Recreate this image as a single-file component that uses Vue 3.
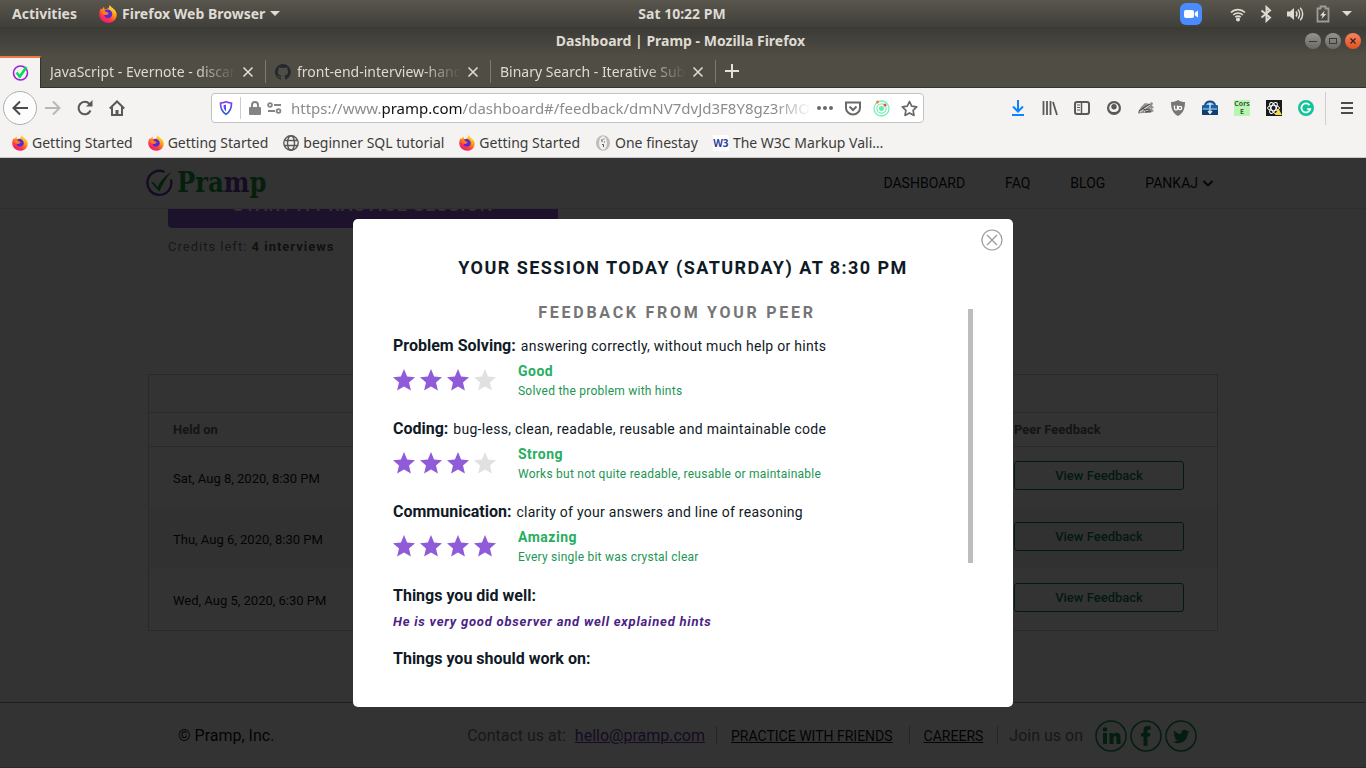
<script setup>
const tabs = [
  { title: 'JavaScript - Evernote - discarded', icon: false },
  { title: 'front-end-interview-handbook', icon: true },
  { title: 'Binary Search - Iterative Submission', icon: false },
]
const bookmarks = [
  { label: 'Getting Started', icon: 'firefox' },
  { label: 'Getting Started', icon: 'firefox' },
  { label: 'beginner SQL tutorial', icon: 'globe' },
  { label: 'Getting Started', icon: 'firefox' },
  { label: 'One finestay', icon: 'key' },
  { label: 'The W3C Markup Vali…', icon: 'w3' },
]
const sessions = ['Sat, Aug 8, 2020, 8:30 PM', 'Thu, Aug 6, 2020, 8:30 PM', 'Wed, Aug 5, 2020, 6:30 PM']
const ratings = [
  { name: 'Problem Solving:', about: 'answering correctly, without much help or hints', stars: 3, grade: 'Good', note: 'Solved the problem with hints' },
  { name: 'Coding:', about: 'bug-less, clean, readable, reusable and maintainable code', stars: 3, grade: 'Strong', note: 'Works but not quite readable, reusable or maintainable' },
  { name: 'Communication:', about: 'clarity of your answers and line of reasoning', stars: 4, grade: 'Amazing', note: 'Every single bit was crystal clear' },
]
</script>

<template>
  <div class="desktop">
    <svg class="defs" width="0" height="0" aria-hidden="true">
      <defs>
        <linearGradient id="fox" x1="0.8" y1="0" x2="0.2" y2="1">
          <stop offset="0" stop-color="#fff44f" /><stop offset="0.4" stop-color="#ff980e" /><stop offset="0.7" stop-color="#ff3647" /><stop offset="1" stop-color="#e31587" />
        </linearGradient>
        <linearGradient id="shield" x1="0" y1="0" x2="0" y2="1">
          <stop offset="0" stop-color="#8a3ff0" /><stop offset="1" stop-color="#2b5fd9" />
        </linearGradient>
        <symbol id="firefox" viewBox="0 0 16 16">
          <path d="M1.6 3.2 2.6 4 4.4 1.6 5 4 8.2 3.2C9 2 9.200 1 9.600 0c1 1.800 2 2.200 3 3.200C15 5 15.800 7 15.700 9c-.3 4-3.500 6.800-7.500 6.800S.6 12.800.3 8.800C.2 6.500.8 4.500 1.600 3.200Z" fill="url(#fox)" />
          <path d="M5 4.800c1-.8 3-1.200 4.500-.4 2 1 2.800 3.200 2 5.200-.8 1.800-2.600 2.500-4.300 2-1.600-.4-2.800-1.800-2.700-3.400 1 .8 2.400.9 3.300.2.7-.5.9-.9.200-1.200C6.800 6.900 5.600 6.500 5 4.800Z" fill="#5a2bd0" />
          <path d="M2.500 6c1-1 2.500-.8 3.500-.2 1 .7 2 .8 2.400 1.200-.2.800-1.300 1-1.900 1.400C5 9.500 3 8.500 2.500 6Z" fill="#ff7a20" />
        </symbol>
        <symbol id="check" viewBox="0 0 28 28">
          <path d="M18.500 3A12 12 0 1 0 24.900 10.500" fill="none" stroke="var(--ring)" stroke-width="2.400" />
          <path d="M5 13.500c1.500-.5 3-.2 4 1l2.500 3.500C15 11 19.500 6 25.800 2.500 20 9 16.500 15 13.500 22.500 10.500 20 8 16.500 5 13.500Z" fill="var(--tick)" />
        </symbol>
        <symbol id="star" viewBox="0 0 22 22">
          <path d="M11 0l3.100 7.600 7.900.7-6 5.300 1.900 8L11 17.400l-6.900 4.200 1.900-8-6-5.300 7.900-.7Z" fill="currentColor" />
        </symbol>
      </defs>
    </svg>

    <div class="panel">
      <div class="panel-left">
        <button class="panel-item">Activities</button>
        <button class="panel-item app-menu">
          <svg width="18" height="18"><use href="#firefox" /></svg>Firefox Web Browser<i class="caret"></i>
        </button>
      </div>
      <time class="panel-item">Sat 10:22 PM</time>
      <div class="tray">
        <svg class="zoomer" width="22" height="22" viewBox="0 0 22 22"><rect width="22" height="22" rx="6" fill="#4a8cff" /><rect x="4" y="7" width="10" height="8" rx="2" fill="#fff" /><path d="M14.800 9.800 18 7.500v7l-3.200-2.300Z" fill="#fff" /></svg>
        <svg width="16" height="16" viewBox="0 0 16 16" fill="none" stroke="#dfdbd2" stroke-width="1.700"><path d="M1 6.500a10 10 0 0 1 14 0M3.200 9a6.800 6.800 0 0 1 9.600 0M5.300 11.200a3.800 3.800 0 0 1 5.400 0" /><circle cx="8" cy="13.500" r="1.200" fill="#dfdbd2" /></svg>
        <svg width="16" height="18" viewBox="0 0 16 18" fill="none" stroke="#dfdbd2" stroke-width="2"><path d="M3.500 5.500 12 12.500 8.500 15.800V2.200L12 5.500 3.500 12.500" /></svg>
        <svg width="18" height="16" viewBox="0 0 18 16"><path d="M1 5.500h3L8 2v12L4 10.500H1Z" fill="#dfdbd2" /><path d="M10 5.500a4 4 0 0 1 0 5M12 3.500a7 7 0 0 1 0 9M14.200 1.800a9 9 0 0 1 0 12.400" fill="none" stroke="#dfdbd2" stroke-width="1.500" /></svg>
        <svg width="14" height="18" viewBox="0 0 14 18"><path d="M4.500 1.500h5v2H12.500v13h-11v-13h3Z" fill="none" stroke="#9f9c95" stroke-width="1.800" /><path d="M8.800 5.500 4 10.500h2.500L5.500 14l4.800-5H7.700Z" fill="#dfdbd2" /></svg>
        <i class="caret"></i>
      </div>
    </div>

    <div class="titlebar">
      <span></span>
      <span class="window-title">Dashboard | Pramp - Mozilla Firefox</span>
      <div class="window-buttons">
        <button aria-label="Minimize"><svg width="10" height="10"><path d="M1 5.500h8" stroke="#3a3935" /></svg></button>
        <button aria-label="Maximize"><svg width="10" height="10"><rect x="1.500" y="2.500" width="7" height="5" fill="none" stroke="#3a3935" /></svg></button>
        <button class="quit" aria-label="Close"><svg width="10" height="10"><path d="M2.500 2.500l5 5M7.500 2.500l-5 5" stroke="#3c2015" stroke-width="1.300" /></svg></button>
      </div>
    </div>

    <div class="tabs">
      <button class="tab-active" aria-label="Dashboard"><svg width="17" height="17"><circle cx="8.500" cy="9" r="7" fill="none" stroke="#a31fd6" stroke-width="1.600" /><path d="M4.500 8.500 7.800 12.500 14.500 3" fill="none" stroke="#06dc5c" stroke-width="2.600" /></svg></button>
      <div v-for="t in tabs" :key="t.title" class="tab">
        <svg v-if="t.icon" width="16" height="16" viewBox="0 0 16 16"><path d="M8 0a8 8 0 0 0-2.500 15.600c.4.100.5-.2.500-.4v-1.500c-2.200.5-2.700-.9-2.700-.9-.4-.9-.9-1.200-.9-1.200-.7-.5.1-.5.1-.5.8.1 1.200.8 1.200.8.7 1.200 1.900.9 2.300.7.1-.5.300-.9.500-1.100-1.800-.2-3.600-.9-3.600-4 0-.9.300-1.600.8-2.100-.1-.2-.4-1 .1-2.100 0 0 .7-.2 2.200.8a7.500 7.500 0 0 1 4 0c1.500-1 2.200-.8 2.200-.8.4 1.100.2 1.900.1 2.100.5.600.8 1.300.8 2.100 0 3.100-1.900 3.700-3.700 3.900.3.300.6.800.6 1.500v2.200c0 .2.100.5.600.4A8 8 0 0 0 8 0Z" fill="#24292e" /></svg>
        <span class="tab-title">{{ t.title }}</span>
        <button class="tab-close" aria-label="Close tab"><svg width="12" height="12"><path d="M1.500 1.500l9 9M10.500 1.500l-9 9" stroke="#dedbd5" stroke-width="1.600" /></svg></button>
      </div>
      <button class="new-tab" aria-label="New tab"><svg width="14" height="14"><path d="M7 0v14M0 7h14" stroke="#e4e1db" stroke-width="2" /></svg></button>
    </div>

    <div class="toolbar">
      <button class="back" aria-label="Back"><svg width="16" height="16" fill="none" stroke="#4c4b49" stroke-width="2"><path d="M16 8H1.500M8 1.500 1.500 8 8 14.500" /></svg></button>
      <button class="tool" aria-label="Forward"><svg width="16" height="16" fill="none" stroke="#b9b8b6" stroke-width="2"><path d="M0 8h14.500M8 1.500 14.500 8 8 14.500" /></svg></button>
      <button class="tool" aria-label="Reload"><svg width="16" height="16" fill="none" stroke="#5a5957" stroke-width="2"><path d="M13.500 10.500A6.200 6.200 0 1 1 12.500 4" /><path d="M15.500 0v6.500H9Z" fill="#5a5957" stroke="none" /></svg></button>
      <button class="tool" aria-label="Home"><svg width="16" height="16" fill="none" stroke="#5a5957" stroke-width="2"><path d="M.8 8.500 8 1.500l7.200 7M3 7v8h10V7" /><path d="M8 15v-5" stroke-width="3" /></svg></button>
      <div class="urlbar">
        <svg width="14" height="16" viewBox="0 0 14 16"><path d="M7 1.800c1.800.9 3.600 1.200 5.500 1.200 0 5.500-1.400 9-5.500 11.200C2.900 12 1.500 8.500 1.500 3c1.900 0 3.700-.3 5.500-1.200Z" fill="none" stroke="url(#shield)" stroke-width="1.700" /><path d="M7 4.500v7c-1.600-1.300-2.400-3.400-2.600-6.200C5.300 5.200 6.100 5 7 4.500Z" fill="#4a55e0" /></svg>
        <i class="url-rule"></i>
        <svg width="12" height="14" viewBox="0 0 12 14"><rect y="6" width="12" height="8" rx="1" fill="#858483" /><path d="M3 6.500V4a3 3 0 0 1 6 0v2.500" fill="none" stroke="#858483" stroke-width="2" /></svg>
        <svg class="perm" width="15" height="12" viewBox="0 0 15 12" fill="none" stroke="#858483" stroke-width="1.800"><circle cx="3" cy="3" r="1.900" /><path d="M7 3h7M1 9h7" /><circle cx="11.500" cy="9" r="1.900" /></svg>
        <label class="url-text"><span>https://www.</span><b>pramp.com</b><span>/dashboard#/feedback/dmNV7dvJd3F8Y8gz3rMO</span></label>
        <button class="url-tool" aria-label="Page actions"><svg width="16" height="4" fill="#6a6967"><circle cx="2" cy="2" r="2" /><circle cx="8" cy="2" r="2" /><circle cx="14" cy="2" r="2" /></svg></button>
        <button class="url-tool" aria-label="Save to Pocket"><svg width="16" height="15" fill="none" stroke="#6a6967" stroke-width="2"><path d="M1 1.500h14V7a7 6.500 0 0 1-14 0Z" /><path d="M4.500 5.500 8 9l3.500-3.500" /></svg></button>
        <button class="url-tool" aria-label="Extension"><svg width="17" height="17" viewBox="0 0 17 17" fill="none" stroke="#7deeb8" stroke-width="1.300"><circle cx="8.500" cy="8.500" r="7.500" /><circle cx="8.500" cy="8.500" r="4.600" /><circle cx="8.500" cy="8.500" r="2" fill="#5ce8a4" /><circle cx="4.500" cy="2" r="1.500" fill="#f5813a" stroke="none" /><circle cx="12" cy="5" r="1.500" fill="#f3502a" stroke="none" /></svg></button>
        <button class="url-tool" aria-label="Bookmark"><svg width="17" height="17" viewBox="0 0 17 17"><path d="m8.500 1.500 2.200 4.700 5 .7-3.600 3.500.9 5-4.500-2.500L4 15.400l.9-5L1.300 6.900l5-.7Z" fill="none" stroke="#6a6967" stroke-width="1.700" stroke-linejoin="round" /></svg></button>
      </div>
      <div class="extensions">
        <svg viewBox="0 0 16 16" fill="none" stroke="#0a84ff" stroke-width="2"><path d="M8 0v11M3 6.500l5 5 5-5M2 15h12" /></svg>
        <svg viewBox="0 0 16 16" fill="none" stroke="#5a5957" stroke-width="1.800"><path d="M1.500 1v14M5 1v14M8.500 1v14M11 2l4 13" /></svg>
        <svg viewBox="0 0 16 16" fill="none" stroke="#5a5957" stroke-width="2"><rect x="1" y="2" width="14" height="12" rx="2" /><path d="M7.500 2v12" stroke-width="1.500" /><path d="M3 5h3M3 7.500h3M3 10h3" stroke-width="1" /></svg>
        <svg viewBox="0 0 16 16"><circle cx="8" cy="8" r="7" fill="#5a5957" /><path d="M3.200 8a4.800 4.800 0 0 1 9.600 0c0 1-.3 1.800-.8 2.500-2 2-6 2-8 0-.5-.7-.8-1.500-.8-2.500Z" fill="#f4f3f2" /><circle cx="8" cy="6.800" r="2.700" fill="#5a5957" /></svg>
        <svg viewBox="0 0 16 16"><path d="M0 12 3 7 7 3l5 1 1-2 2 1-1 3 2 1-2 2 2 2-4 2H5l-5 .5Z" fill="#908f8c" /><path d="M2 12 12 5M6 12l7-4" stroke="#e2e1df" /><path d="m1 11 6-4 5-3M4 8l3 2 5-1M7 12l6-1" stroke="#454442" fill="none" /></svg>
        <svg viewBox="0 0 16 16"><path d="M8 0c2 1.500 4.500 2 7 2 0 7-2 11.500-7 14C3 13.500 1 9 1 2c2.500 0 5-.5 7-2Z" fill="#787776" /><path d="M4.500 5.500v3a1.500 1.500 0 0 0 3 0v-3" fill="none" stroke="#fff" stroke-width="1.300" /><circle cx="10" cy="8" r="1.700" fill="none" stroke="#fff" stroke-width="1.300" /></svg>
        <svg viewBox="0 0 16 16"><path d="M3 6c0-6 10-6 10 0" fill="#8fc3ea" stroke="#1b4a7c" stroke-width="2" /><rect y="5" width="16" height="10" rx="1" fill="#1d5fa5" /><path d="M0 10h16v4a1 1 0 0 1-1 1H1a1 1 0 0 1-1-1Z" fill="#143c6c" /><path d="M1 9h6M9 9h6" stroke="#64b4e6" stroke-width="1.500" /><path d="M8 3v10M6 11l2 2.500 2-2.500" fill="none" stroke="#e4f4ff" stroke-width="1.300" /></svg>
        <span class="cors">Cors<br />E</span>
        <svg viewBox="0 0 16 16"><rect width="16" height="16" fill="#1b1b1b" /><g fill="none" stroke="#fff"><ellipse cx="7.500" cy="8" rx="6" ry="2.500" /><ellipse cx="7.500" cy="8" rx="6" ry="2.500" transform="rotate(60 7.500 8)" /><ellipse cx="7.500" cy="8" rx="6" ry="2.500" transform="rotate(120 7.500 8)" /></g><path d="m12.500 8.500 3.500 6.500H9Z" fill="#f6d93b" /></svg>
        <svg viewBox="0 0 16 16"><circle cx="8" cy="8" r="8" fill="#15c39a" /><path d="M11.500 5.200A4.500 4.500 0 1 0 12.300 9H9" fill="none" stroke="#fff" stroke-width="1.700" /></svg>
      </div>
      <button class="menu" aria-label="Menu"><svg width="12" height="12"><path d="M0 1h12M0 6h12M0 11h12" stroke="#4c4b49" stroke-width="2" /></svg></button>
    </div>

    <div class="bookmarks">
      <a v-for="(b, i) in bookmarks" :key="i" href="#">
        <svg v-if="b.icon === 'firefox'" width="16" height="16"><use href="#firefox" /></svg>
        <svg v-else-if="b.icon === 'globe'" width="16" height="16" fill="none" stroke="#5a5957" stroke-width="1.400"><circle cx="8" cy="8" r="7.200" /><ellipse cx="8" cy="8" rx="3.500" ry="7.200" /><path d="M1.500 5.500h13M1.500 10.500h13" /></svg>
        <svg v-else-if="b.icon === 'key'" width="16" height="16"><ellipse cx="8" cy="8" rx="7" ry="7.800" fill="#bdbcba" /><ellipse cx="8" cy="8" rx="4" ry="6.800" fill="#f1f0ee" /><path d="M7 4v3M8.500 4h1M7 9.500h1.500V12M9 7h1" stroke="#555" fill="none" /></svg>
        <span v-else class="w3">W3</span>
        <span>{{ b.label }}</span>
      </a>
    </div>

    <div class="page">
      <header class="site-header">
        <a href="#" class="logo" aria-label="Pramp"><svg width="28" height="28"><use href="#check" /></svg><span>Pra<em>m</em>p</span></a>
        <nav>
          <a href="#">DASHBOARD</a><a href="#">FAQ</a><a href="#">BLOG</a>
          <a href="#">PANKAJ<svg width="12" height="12"><path d="M1.500 4 6 8.500 10.500 4" fill="none" stroke="#0b1420" stroke-width="1.800" /></svg></a>
        </nav>
      </header>
      <main>
        <div class="hero">
          <button class="start">START A PRACTICE SESSION</button>
          <p>Credits left: <b>4 interviews</b></p>
        </div>
        <table>
          <thead>
            <tr class="spacer-row"><td colspan="2"></td></tr>
            <tr><th class="held">Held on</th><th class="peer">Peer Feedback</th></tr>
          </thead>
          <tbody>
            <tr v-for="s in sessions" :key="s"><td>{{ s }}</td><td class="action"><button>View Feedback</button></td></tr>
          </tbody>
        </table>
      </main>
      <footer>
        <div class="footer-inner">
          <span class="copy">© Pramp, Inc.</span>
          <span class="contact">Contact us at: <a href="#">hello@pramp.com</a></span>
          <a href="#" class="foot-link">PRACTICE WITH FRIENDS</a>
          <a href="#" class="foot-link careers">CAREERS</a>
          <span class="join">Join us on</span>
          <div class="social">
            <a href="#" aria-label="LinkedIn"><svg viewBox="0 0 32 32"><circle cx="16" cy="16" r="15" /><path d="M8 13h4v11H8ZM14.500 13h4v1.500c2-3 7-2 7 2.500v7h-4v-6c0-3-3-2.500-3 0v6h-4Z" /><circle class="dot" cx="10" cy="9.500" r="2.300" /></svg></a>
            <a href="#" aria-label="Facebook"><svg viewBox="0 0 32 32"><circle cx="16" cy="16" r="15" /><path d="M13.500 26v-9.500H11V13h2.500v-3c0-3 2-4.500 7-3.800v3.500c-2 0-3-.2-3 1.300v2h3l-.5 3.500h-2.500V26Z" /></svg></a>
            <a href="#" aria-label="Twitter"><svg viewBox="0 0 32 32"><circle cx="16" cy="16" r="15" /><path d="M24.500 11.500c-.6.300-1.200.4-1.900.5.700-.4 1.200-1 1.400-1.800-.6.400-1.300.6-2.100.8a3.400 3.400 0 0 0-5.800 3c-2.800-.1-5.200-1.400-6.900-3.500-.9 1.600-.4 3.500 1 4.500-.5 0-1-.2-1.500-.4 0 1.600 1.100 3 2.600 3.300-.4.100-.9.200-1.500.1.400 1.300 1.600 2.200 3.100 2.300a6.800 6.800 0 0 1-5 1.400c6.500 4 15-.2 14.800-8.400.7-.5 1.300-1.100 1.800-1.800Z" /></svg></a>
          </div>
        </div>
      </footer>

      <div class="backdrop">
        <section class="modal" role="dialog" aria-labelledby="session-title">
          <button class="dismiss" aria-label="Close"><svg width="22" height="22" fill="none" stroke="#999" stroke-width="1.200"><circle cx="11" cy="11" r="10" /><path d="M6 6l10 10M16 6 6 16" /></svg></button>
          <h1 id="session-title">YOUR SESSION TODAY (SATURDAY) AT 8:30 PM</h1>
          <div class="scroller">
            <h2>FEEDBACK FROM YOUR PEER</h2>
            <article v-for="r in ratings" :key="r.name">
              <h3>{{ r.name }} <span>{{ r.about }}</span></h3>
              <div class="rating">
                <div class="stars"><svg v-for="n in 4" :key="n" width="22" height="22" :class="{ off: n > r.stars }"><use href="#star" /></svg></div>
                <div><strong>{{ r.grade }}</strong><p>{{ r.note }}</p></div>
              </div>
            </article>
            <h3 class="topic">Things you did well:</h3>
            <p class="quote">He is very good observer and well explained hints</p>
            <h3 class="topic">Things you should work on:</h3>
            <i class="thumb"></i>
          </div>
        </section>
      </div>
    </div>
  </div>
</template>

<style>
body { margin: 0; }
</style>

<style scoped>
* { box-sizing: border-box; }
.desktop { height: 100vh; display: flex; flex-direction: column; overflow: hidden; font: 14px/20px "Noto Sans", sans-serif; color: #3d3c3a; }
.defs { position: absolute; }
button { background: none; border: 0; padding: 0; margin: 0; font: inherit; letter-spacing: inherit; color: inherit; display: flex; align-items: center; justify-content: center; }
a { color: inherit; text-decoration: none; }
p, h1, h2, h3 { margin: 0; }
svg { flex: none; display: block; }

.panel, .titlebar { display: grid; grid-template-columns: 1fr auto 1fr; align-items: center; flex: none; }
.panel { height: 27px; padding: 0 14px 0 12px; background: linear-gradient(#59564d, #403f3a); }
.panel-left { display: flex; gap: 22px; }
.panel-item { color: #dfdbd2; font-weight: 700; font-size: 14px; white-space: nowrap; }
.app-menu { gap: 5px; }
.caret { border: 5px solid transparent; border-top-color: #dfdbd2; border-bottom: 0; }
.tray { display: flex; align-items: center; justify-content: flex-end; gap: 12px; }
.zoomer { margin-right: 16px; }
.titlebar { height: 28px; padding-right: 5px; background: linear-gradient(#3b3a35, #4f4c44); }
.window-title { color: #dfdbd2; font-weight: 700; }
.window-buttons { display: flex; justify-content: flex-end; gap: 4px; }
.window-buttons button { width: 16px; height: 16px; border-radius: 50%; background: linear-gradient(#95938d, #6b6963); }
.window-buttons .quit { background: linear-gradient(#f58362, #e2511f); }

.tabs { display: flex; flex: none; height: 33px; background: #504d45; border-bottom: 1px solid #33322e; }
.tab-active { width: 41px; height: 32px; margin-top: 1px; padding-bottom: 2px; background: #f4f3f2; border-top: 2px solid #f07746; border-right: 1px solid #33322e; }
.tab { width: 225px; display: flex; align-items: center; gap: 6px; padding: 1px 12px 0 9px; position: relative; color: #dedbd5; }
.tab::after { content: ""; position: absolute; right: 0; top: 5px; bottom: 4px; width: 1px; background: #7d7a73; }
.tab-title { flex: 1; overflow: hidden; white-space: nowrap; mask-image: linear-gradient(to left, transparent, #000 40px); }
.new-tab { width: 32px; }

.toolbar { display: flex; align-items: center; flex: none; height: 40px; padding: 0 13px 0 3px; background: #f4f3f2; }
.back { width: 34px; height: 34px; border: 1px solid #b1b0ae; border-radius: 50%; background: #fcfcfc; }
.tool { width: 32px; height: 32px; }
.urlbar { flex: 1; min-width: 0; height: 30px; margin: 0 78px; padding: 0 6px 0 7px; display: flex; align-items: center; background: #fff; border: 1px solid #c3c2c1; border-radius: 4px; }
.url-rule { width: 1px; height: 22px; margin: 0 8px 0 7px; background: #ccc; }
.perm { margin: 0 9px 0 6px; }
.url-text { flex: 1; min-width: 0; overflow: hidden; white-space: nowrap; font-size: 15px; color: #8d8c8b; mask-image: linear-gradient(to left, transparent, #000 36px); }
.url-text b { font-weight: 400; color: #111; }
.url-tool { width: 28px; height: 28px; flex: none; }
.url-tool:last-child { margin-right: -6px; }
.extensions { display: flex; gap: 16px; padding-left: 8px; }
.extensions svg { width: 16px; height: 16px; }
.cors { width: 16px; height: 16px; overflow: hidden; background: #b5f7b1; font-size: 7px; font-weight: 600; line-height: 8px; text-align: center; }
.menu { width: 28px; height: 33px; margin-left: 11px; padding-left: 15px; border-left: 1px solid #d0cfce; }

.bookmarks { display: flex; align-items: center; gap: 15px; flex: none; height: 30px; padding: 0 12px; background: #f4f3f2; border-bottom: 1px solid #cbcac9; white-space: nowrap; }
.bookmarks a { display: flex; align-items: center; gap: 4px; }
.w3 { width: 16px; height: 16px; background: #fff; color: #2e3f9e; font: 700 10px/16px "Open Sans", sans-serif; text-align: center; }

.page { flex: 1; min-height: 0; position: relative; display: flex; flex-direction: column; background: #fff; font-family: Roboto, sans-serif; color: #0b1420; }
.site-header { flex: none; height: 51px; padding: 0 calc(50% - 537px); display: flex; align-items: center; justify-content: space-between; border-bottom: 1px solid #e4e4e4; z-index: 1; background: #fff; }
.logo { --ring: #6b39a8; --tick: #1e9a44; display: flex; align-items: center; gap: 3px; color: #1e9a44; font: 700 27px/32px "DejaVu Serif Condensed", "DejaVu Serif", serif; }
.logo em { font-style: normal; color: #6b39a8; }
nav { display: flex; gap: 40px; padding-right: 6px; font-size: 14px; }
nav a { display: flex; align-items: center; gap: 4px; }
main { flex: 1; min-height: 0; overflow: hidden; padding: 0 calc(50% - 535px); }
.hero { width: 390px; height: 196px; margin: -31px 0 0 20px; font-size: 13px; letter-spacing: 1px; color: #777; }
.start { width: 100%; height: 50px; padding-top: 4px; margin-bottom: 9px; border-radius: 4px; background: #8f5bd9; color: #fff; font-size: 18px; line-height: 24px; font-weight: 500; white-space: nowrap; }
.hero b { color: #555; }
table { width: 100%; border-collapse: separate; border-spacing: 0; border: 1px solid #ccc; font-size: 13px; line-height: 18px; }
th, td { padding: 0 0 0 24px; text-align: left; }
.spacer-row td { height: 37px; }
th { height: 35px; border-top: 1px solid #ccc; border-bottom: 1px solid #ccc; color: #666; font-weight: 700; }
th.peer, td.action { width: 203px; padding-left: 0; }
tbody td { height: 61px; padding-top: 2px; }
tbody tr:nth-child(even) { background: #f6f6f6; }
td.action { vertical-align: top; padding-top: 14px; }
td.action button { width: 170px; height: 29px; border: 1px solid #0a7d55; border-radius: 3px; color: #0a7d55; font-weight: 500; }
footer { flex: none; height: 66px; border-top: 1px solid #999; border-bottom: 1px solid #ccc; padding: 0 calc(50% - 535px); }
.footer-inner { height: 100%; display: flex; align-items: center; padding: 2px 21px 0 30px; font-size: 16px; white-space: nowrap; }
.copy { margin-right: auto; }
.contact, .join { color: #777; }
.contact a { margin-left: 5px; color: #6b39a8; text-decoration: underline; }
.foot-link { font-size: 14px; text-decoration: underline; }
.foot-link, .join { position: relative; margin-left: 26px; }
.foot-link::before, .join::before { content: ""; position: absolute; left: -15px; top: 0; width: 1px; height: 18px; background: #bbb; }
.careers { margin-left: 31px; }
.join::before { left: -12px; }
.social { display: flex; gap: 3px; margin-left: 12px; }
.social svg { width: 32px; height: 32px; fill: #12904a; stroke: none; }
.social circle:not(.dot) { fill: none; stroke: #12904a; stroke-width: 1.5; }

.backdrop { position: absolute; inset: 0; z-index: 2; display: flex; align-items: center; justify-content: center; background: rgba(0, 0, 0, 0.8); }
.modal { position: relative; width: 660px; height: 80%; padding: 37px 40px 30px; display: flex; flex-direction: column; background: #fff; border-radius: 5px; color: #101a26; }
.dismiss { position: absolute; top: 10px; right: 10px; }
h1 { font-size: 18px; line-height: 24px; letter-spacing: 0.08em; text-align: center; font-weight: 700; margin-bottom: 21px; }
.scroller { position: relative; flex: 1; min-height: 0; overflow: hidden; padding-right: 12px; }
h2 { font-size: 16px; line-height: 24px; letter-spacing: 0.17em; text-align: center; font-weight: 700; color: #757575; margin-bottom: 11px; }
h3 { font-size: 16px; line-height: 20px; font-weight: 700; }
h3 span { margin-left: 1px; font-size: 14px; font-weight: 400; letter-spacing: 0.02em; }
article { height: 83px; }
.rating { display: flex; gap: 21px; padding-top: 5px; }
.stars { display: flex; gap: 5px; width: 104px; padding-top: 8px; color: #8f5bd9; }
.stars .off { color: #e1e1e1; }
strong { display: block; line-height: 20px; font-size: 14px; letter-spacing: 0.5px; color: #27ae60; }
.rating p { font-size: 12px; line-height: 20px; letter-spacing: 0.02em; color: #219653; }
.topic { padding-top: 1px; }
.quote { margin: 6px 0 16px; font-size: 13px; line-height: 20px; font-weight: 700; font-style: italic; letter-spacing: 0.06em; color: #4b2286; }
.thumb { position: absolute; top: 8px; right: 0; width: 5px; height: 254px; background: #bdbdbd; }
</style>
